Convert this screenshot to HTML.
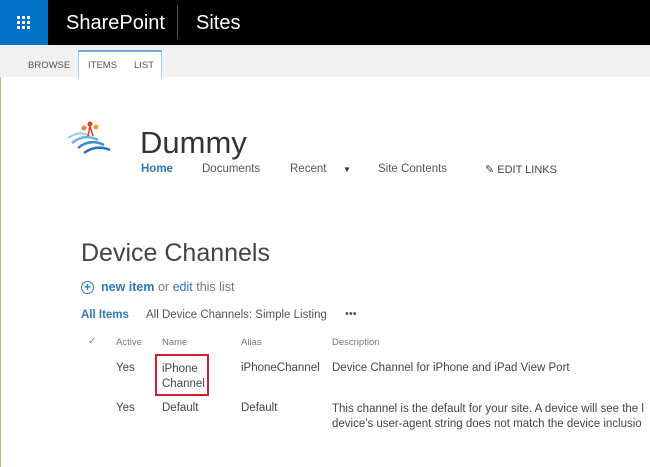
<!DOCTYPE html>
<html><head><style>
body{margin:0;width:650px;height:467px;overflow:hidden;background:#fff;font-family:"Liberation Sans",sans-serif;position:relative}
.a{position:absolute;white-space:nowrap}
</style></head><body>
<div class="a" style="left:0;top:0;width:650px;height:45px;background:#000"></div>
<div class="a" style="left:0;top:0;width:48px;height:45px;background:#0072c6"></div>
<svg class="a" style="left:17px;top:16px" width="14" height="14"><g fill="#fff">
<rect x="0" y="0" width="3" height="3"/><rect x="5" y="0" width="3" height="3"/><rect x="10" y="0" width="3" height="3"/>
<rect x="0" y="5" width="3" height="3"/><rect x="5" y="5" width="3" height="3"/><rect x="10" y="5" width="3" height="3"/>
<rect x="0" y="10" width="3" height="3"/><rect x="5" y="10" width="3" height="3"/><rect x="10" y="10" width="3" height="3"/></g></svg>
<div class="a" style="left:66px;top:12px;color:#fff;font-size:20px">SharePoint</div>
<div class="a" style="left:177px;top:5px;width:1px;height:34px;background:#555"></div>
<div class="a" style="left:196px;top:12px;color:#fff;font-size:20px">Sites</div>
<div class="a" style="left:0;top:45px;width:650px;height:32px;background:#f1f1f1"></div>
<div class="a" style="left:78px;top:50px;width:82px;height:27px;background:#fff;border:1px solid #a8c8e0;border-top:2px solid #6aa9d6;border-bottom:none"></div>
<div class="a" style="left:28px;top:60px;font-size:9.5px;color:#555">BROWSE</div>
<div class="a" style="left:88px;top:60px;font-size:9.5px;color:#555">ITEMS</div>
<div class="a" style="left:134px;top:60px;font-size:9.5px;color:#555">LIST</div>
<div class="a" style="left:0;top:77px;width:1px;height:390px;background:#e0a090"></div>
<svg class="a" style="left:66px;top:118px" width="50" height="42">
<path d="M2 20 Q14 12 24 18" stroke="#9ccbec" stroke-width="2" fill="none"/>
<path d="M6 25 Q18 15 32 22" stroke="#6bb0e0" stroke-width="2.5" fill="none"/>
<path d="M12 30 Q24 20 38 27" stroke="#3a8ad0" stroke-width="2.5" fill="none"/>
<path d="M18 35 Q30 26 44 32" stroke="#2a6fc0" stroke-width="2.5" fill="none"/>
<circle cx="24" cy="6" r="2.5" fill="#e04030"/><circle cx="30" cy="9" r="2.5" fill="#f0a030"/><circle cx="18" cy="10" r="2.5" fill="#f08030"/>
<path d="M24 8 L22 18 M24 8 L27 18" stroke="#e04030" stroke-width="1.5"/>
</svg>
<div class="a" style="left:140px;top:125px;font-size:31px;color:#333">Dummy</div>
<div class="a" style="left:141px;top:163px;font-size:11.5px;color:#2a7ab8;font-weight:bold">Home</div>
<div class="a" style="left:202px;top:163px;font-size:11.5px;color:#555">Documents</div>
<div class="a" style="left:290px;top:163px;font-size:11.5px;color:#555">Recent</div>
<div class="a" style="left:343px;top:165px;font-size:8px;color:#333">▼</div>
<div class="a" style="left:378px;top:163px;font-size:11.5px;color:#555">Site Contents</div>
<div class="a" style="left:485px;top:163px;font-size:11px;color:#444">✎ EDIT LINKS</div>
<div class="a" style="left:81px;top:239px;font-size:25px;color:#444">Device Channels</div>
<div class="a" style="left:81px;top:281px;width:11px;height:11px;border:1.5px solid #2a7ab8;border-radius:50%;color:#2a7ab8;font-size:12px;line-height:11px;text-align:center;font-weight:bold">+</div>
<div class="a" style="left:101px;top:280px;font-size:12.5px;color:#2a7ab8"><b>new item</b> <span style="color:#777">or</span> edit <span style="color:#777">this list</span></div>
<div class="a" style="left:81px;top:309px;font-size:11.5px;color:#2a7ab8;font-weight:bold">All Items</div>
<div class="a" style="left:146px;top:309px;font-size:11.5px;color:#555">All Device Channels: Simple Listing</div>
<div class="a" style="left:345px;top:308px;font-size:11px;color:#555">•••</div>
<div class="a" style="left:88px;top:336px;font-size:10px;color:#777">✓</div>
<div class="a" style="left:116px;top:337px;font-size:9.5px;color:#777">Active</div>
<div class="a" style="left:162px;top:337px;font-size:9.5px;color:#777">Name</div>
<div class="a" style="left:241px;top:337px;font-size:9.5px;color:#777">Alias</div>
<div class="a" style="left:332px;top:337px;font-size:9.5px;color:#777">Description</div>
<div class="a" style="left:116px;top:362px;font-size:11.5px;color:#444">Yes</div>
<div class="a" style="left:155px;top:354px;width:50px;height:38px;border:2px solid #d02030"></div>
<div class="a" style="left:162px;top:362px;font-size:11.5px;color:#444;line-height:15px">iPhone<br>Channel</div>
<div class="a" style="left:241px;top:362px;font-size:11.5px;color:#444">iPhoneChannel</div>
<div class="a" style="left:332px;top:362px;font-size:11.5px;color:#444">Device Channel for iPhone and iPad View Port</div>
<div class="a" style="left:116px;top:402px;font-size:11.5px;color:#444">Yes</div>
<div class="a" style="left:162px;top:402px;font-size:11.5px;color:#444">Default</div>
<div class="a" style="left:241px;top:402px;font-size:11.5px;color:#444">Default</div>
<div class="a" style="left:332px;top:402px;font-size:11.5px;color:#444;line-height:15px">This channel is the default for your site. A device will see the l<br>device's user-agent string does not match the device inclusio</div>
</body></html>
